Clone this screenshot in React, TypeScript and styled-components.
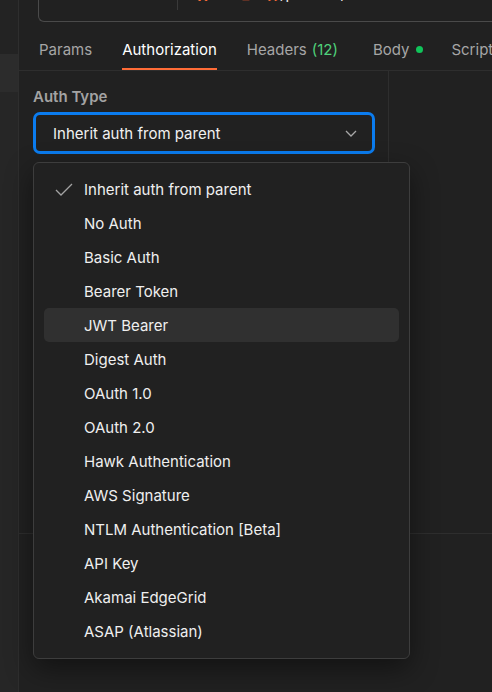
import React from "react";
import styled, { createGlobalStyle } from "styled-components";

const Global = createGlobalStyle`
  html, body { margin: 0; padding: 0; background: #212121; }
  body { font-family: Inter, "Noto Sans", sans-serif; overflow: hidden; }
  * { box-sizing: border-box; }
`;

const Page = styled.div`
  position: relative;
  display: flex;
  width: 492px;
  height: 692px;
  background: #212121;
  overflow: hidden;
`;

const Sidebar = styled.div`
  width: 19px;
  flex: none;
  display: flex;
  flex-direction: column;
  background: #262626;
  border-right: 1px solid #2e2e2e;
`;

const SideBlock = styled.div<{ $h: number; $bg: string }>`
  height: ${(p) => p.$h}px;
  background: ${(p) => p.$bg};
  border-bottom: 1px solid #2c2c2c;
`;

const Main = styled.div`
  flex: 1;
  display: flex;
  flex-direction: column;
  min-width: 0;
`;

const UrlArea = styled.div`
  height: 22px;
  padding-left: 19px;
  display: flex;
  align-items: flex-end;
  overflow: hidden;
`;

const UrlBox = styled.div`
  flex: none;
  width: 500px;
  height: 46px;
  display: flex;
  align-items: flex-start;
  border: 1px solid #4a4a4a;
  border-right: none;
  border-radius: 6px 0 0 6px;
`;

const Method = styled.div`
  width: 138px;
  padding: 8px 0 0 15px;
  font-size: 15px;
  font-weight: 600;
  line-height: 18px;
  color: #ffcb4f;
`;

const Divider = styled.div`
  width: 1px;
  height: 33px;
  background: #3a3a3a;
`;

const UrlText = styled.div`
  padding: 8px 0 0 17px;
  font-size: 15px;
  line-height: 18px;
  color: #ececec;
  white-space: nowrap;
`;

const Var = styled.span`
  color: #ff6c37;
`;

const Tabs = styled.div`
  height: 49px;
  display: flex;
  align-items: stretch;
  gap: 30px;
  padding-left: 20px;
  border-bottom: 1px solid #2e2e2e;
  white-space: nowrap;
`;

const Tab = styled.div<{ $active?: boolean; $shift?: number }>`
  display: flex;
  align-items: center;
  padding-top: 9px;
  margin-left: ${(p) => p.$shift ?? 0}px;
  font-size: 15px;
  font-weight: 400;
  color: ${(p) => (p.$active ? "#ffffff" : "#a6a6a6")};
  border-bottom: 2px solid ${(p) => (p.$active ? "#ff6c37" : "transparent")};
`;

const Count = styled.span`
  color: #4fd17a;
  margin-left: 5px;
`;

const Dot = styled.span`
  width: 7px;
  height: 7px;
  border-radius: 50%;
  background: #10c45a;
  margin-left: 7px;
`;

const Content = styled.div`
  height: 463px;
  display: flex;
  border-bottom: 1px solid #2e2e2e;
`;

const LeftPane = styled.div`
  width: 370px;
  flex: none;
  padding: 17px 0 0 14px;
  border-right: 1px solid #2e2e2e;
`;

const Label = styled.div`
  font-size: 15px;
  font-weight: 600;
  line-height: 18px;
  color: #a3a3a3;
  margin-bottom: 6px;
`;

const Select = styled.div`
  width: 342px;
  height: 42px;
  display: flex;
  align-items: center;
  justify-content: space-between;
  padding: 0 15px 0 17px;
  border: 3px solid #0b7cef;
  border-radius: 7px;
  font-size: 15px;
  color: #f0f0f0;
`;

const Menu = styled.div`
  position: absolute;
  left: 33px;
  top: 162px;
  width: 377px;
  padding: 9px 10px 10px;
  background: #212121;
  border: 1px solid #3d3d3d;
  border-radius: 6px;
  box-shadow: 0 10px 28px rgba(0, 0, 0, 0.45);
`;

const Item = styled.div<{ $hover?: boolean }>`
  height: 34px;
  display: flex;
  align-items: center;
  padding-left: 11px;
  border-radius: 5px;
  background: ${(p) => (p.$hover ? "#303030" : "transparent")};
  font-size: 15px;
  color: #efefef;
`;

const CheckSlot = styled.span`
  width: 29px;
  flex: none;
  display: flex;
  align-items: center;
`;

const items = [
  "Inherit auth from parent",
  "No Auth",
  "Basic Auth",
  "Bearer Token",
  "JWT Bearer",
  "Digest Auth",
  "OAuth 1.0",
  "OAuth 2.0",
  "Hawk Authentication",
  "AWS Signature",
  "NTLM Authentication [Beta]",
  "API Key",
  "Akamai EdgeGrid",
  "ASAP (Atlassian)",
];

export default function App() {
  return (
    <>
      <Global />
      <Page>
        <Sidebar>
          <SideBlock $h={55} $bg="#232323" />
          <SideBlock $h={37} $bg="#2c2c2c" />
        </Sidebar>
        <Main>
          <UrlArea>
            <UrlBox>
              <Method>POST</Method>
              <Divider />
              <UrlText>
                <Var>{"{{base_url}}"}</Var>/product/create
              </UrlText>
            </UrlBox>
          </UrlArea>
          <Tabs>
            <Tab>Params</Tab>
            <Tab $active>Authorization</Tab>
            <Tab>
              Headers<Count>(12)</Count>
            </Tab>
            <Tab $shift={5}>
              Body<Dot />
            </Tab>
            <Tab $shift={-2}>Scripts</Tab>
          </Tabs>
          <Content>
            <LeftPane>
              <Label>Auth Type</Label>
              <Select>
                <span>Inherit auth from parent</span>
                <svg width="12" height="7" viewBox="0 0 12 7" fill="none">
                  <path d="M1 1l5 5 5-5" stroke="#a8a8a8" strokeWidth="1.3" />
                </svg>
              </Select>
            </LeftPane>
          </Content>
        </Main>
        <Menu>
          {items.map((t, i) => (
            <Item key={t} $hover={i === 4}>
              <CheckSlot>
                {i === 0 && (
                  <svg width="18" height="13" viewBox="0 0 18 13" fill="none">
                    <path d="M1 7l5 5L17 1" stroke="#a3a3a3" strokeWidth="1.3" />
                  </svg>
                )}
              </CheckSlot>
              {t}
            </Item>
          ))}
        </Menu>
      </Page>
    </>
  );
}
